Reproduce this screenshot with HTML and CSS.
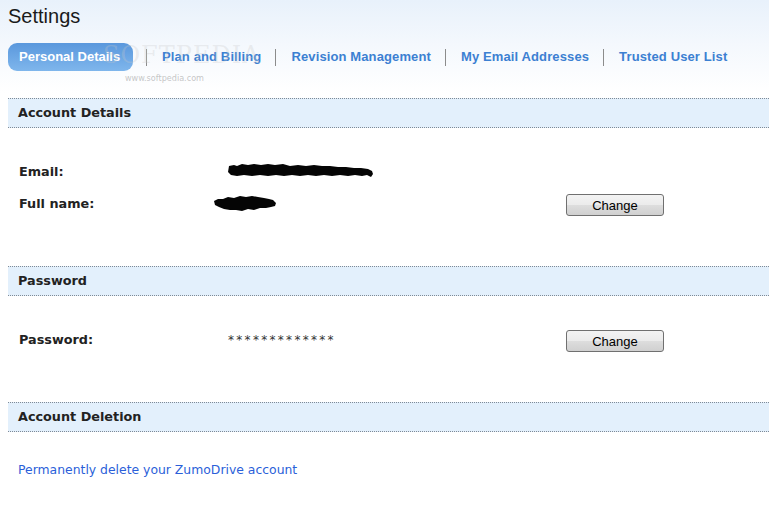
FILE: index.html
```html
<!DOCTYPE html>
<html>
<head>
<meta charset="utf-8">
<link rel="stylesheet" href="styles.css">
</head>
<body>
<div class="top">
  <h1 class="title">Settings</h1>
  <nav class="tabs">
    <a class="tab active">Personal Details</a>
    <span class="sep"></span>
    <a class="tab">Plan and Billing</a>
    <span class="sep"></span>
    <a class="tab">Revision Management</a>
    <span class="sep"></span>
    <a class="tab">My Email Addresses</a>
    <span class="sep"></span>
    <a class="tab">Trusted User List</a>
  </nav>
  <div class="wm-big">SOFTPEDIA</div>
  <div class="wm-small">www.softpedia.com</div>
</div>

<section class="section">
  <h2 class="sec-head">Account Details</h2>
  <div class="sec-body">
    <div class="row">
      <div class="label">Email:</div>
      <div class="value">
        <svg class="blob" width="146" height="16" viewBox="0 0 146 16"><path d="M1 3 L6 2 L9 3 L14 1 L20 2 L26 1 L33 2 L40 1 L47 2 L55 1 L62 3 L70 2 L78 3 L86 2 L94 3 L102 3 L110 4 L118 4 L126 5 L133 5 L140 6 L144 8 L145 11 L143 14 L139 12 L134 13 L127 12 L120 13 L112 12 L104 13 L96 12 L88 13 L80 12 L72 13 L64 12 L56 13 L48 12 L40 13 L32 12 L24 13 L16 12 L9 13 L3 12 L0 9 Z" fill="#050505"/></svg>
      </div>
      <div class="action"></div>
    </div>
    <div class="row">
      <div class="label">Full name:</div>
      <div class="value">
        <svg class="blob blob-name" width="64" height="17" viewBox="0 0 64 17"><path d="M1 6 L5 4 L10 4 L15 2 L21 3 L27 1 L33 2 L39 1 L45 2 L51 3 L56 4 L60 5 L63 8 L62 11 L58 12 L53 13 L47 13 L41 15 L35 14 L29 16 L23 15 L17 15 L11 14 L6 12 L2 10 Z" fill="#050505"/></svg>
      </div>
      <div class="action"><button class="btn">Change</button></div>
    </div>
  </div>
</section>

<section class="section">
  <h2 class="sec-head">Password</h2>
  <div class="sec-body">
    <div class="row">
      <div class="label">Password:</div>
      <div class="value stars">*************</div>
      <div class="action"><button class="btn">Change</button></div>
    </div>
  </div>
</section>

<section class="section">
  <h2 class="sec-head">Account Deletion</h2>
  <div class="sec-body del">
    <a class="link">Permanently delete your ZumoDrive account</a>
  </div>
</section>
</body>
</html>
```
FILE: styles.css
```css
html, body {
  margin: 0;
  padding: 0;
  background: #fff;
}
body {
  width: 769px;
  overflow: hidden;
  font-family: "DejaVu Sans", Verdana, sans-serif;
  color: #222;
}
.top {
  position: relative;
  padding: 2px 0 0 8px;
  height: 98px;
  box-sizing: border-box;
  background: linear-gradient(to bottom, #e8f1fb 0%, #f4f8fd 45%, #ffffff 95%);
}
.title {
  margin: 0;
  font-family: "Liberation Sans", Arial, sans-serif;
  font-weight: normal;
  font-size: 20px;
  line-height: 28px;
  color: #1a1a1a;
}
.tabs {
  display: flex;
  align-items: center;
  margin-top: 13px;
  height: 28px;
}
.tab {
  font-family: "Liberation Sans", Arial, sans-serif;
  font-weight: bold;
  font-size: 13px;
  letter-spacing: 0.12px;
  color: #3c80d2;
  padding: 0 11px;
  line-height: 28px;
  white-space: nowrap;
}
.tab.active {
  color: #fff;
  letter-spacing: 0;
  border-radius: 9px;
  background: linear-gradient(to bottom, #5a98dd, #7fb6ec);
  width: 103px;
  margin-right: 10px;
}
.sep {
  width: 1px;
  height: 17px;
  background: #8c8c8c;
  margin: 0 4px 0 3px;
}
.wm-big {
  position: absolute;
  left: 103px;
  top: 41px;
  font-family: "DejaVu Serif", serif;
  font-size: 24px;
  letter-spacing: 1px;
  color: rgba(200, 200, 200, 0.3);
  pointer-events: none;
}
.wm-small {
  position: absolute;
  left: 125px;
  top: 73px;
  font-family: "DejaVu Sans Condensed", "DejaVu Sans", sans-serif;
  font-size: 9px;
  color: rgba(160, 160, 160, 0.6);
}
.section {
  margin-left: 8px;
}
.sec-head {
  margin: 0;
  height: 28px;
  line-height: 28px;
  padding-left: 10px;
  background: #e3f0fc;
  border-top: 1px dotted #7f8a96;
  border-bottom: 1px dotted #7f8a96;
  font-size: 12.8px;
  font-weight: bold;
  color: #222;
}
.sec-body {
  padding: 27px 0 47px 11px;
}
.row {
  display: grid;
  grid-template-columns: 209px 338px auto;
  height: 32px;
  align-items: center;
}
.label {
  font-size: 12.8px;
  font-weight: bold;
  color: #222;
}
.value {
  display: flex;
  align-items: center;
  font-size: 12px;
}
.blob {
  display: block;
}
.blob-name {
  margin-left: -15px;
}
.stars {
  letter-spacing: 2.3px;
  color: #333;
  padding-top: 2px;
}
.btn {
  width: 98px;
  height: 22px;
  padding: 0;
  border: 1px solid #707070;
  border-radius: 3px;
  background: linear-gradient(to bottom, #f3f3f3 0%, #ebebeb 50%, #dddddd 51%, #d0d0d0 100%);
  font-family: "Liberation Sans", Arial, sans-serif;
  font-size: 13px;
  color: #000;
  margin-top: 4px;
}
.del {
  padding: 28px 0 20px 10px;
}
.link {
  display: block;
  line-height: 20px;
  font-size: 12.4px;
  color: #2b5fd9;
}
```
